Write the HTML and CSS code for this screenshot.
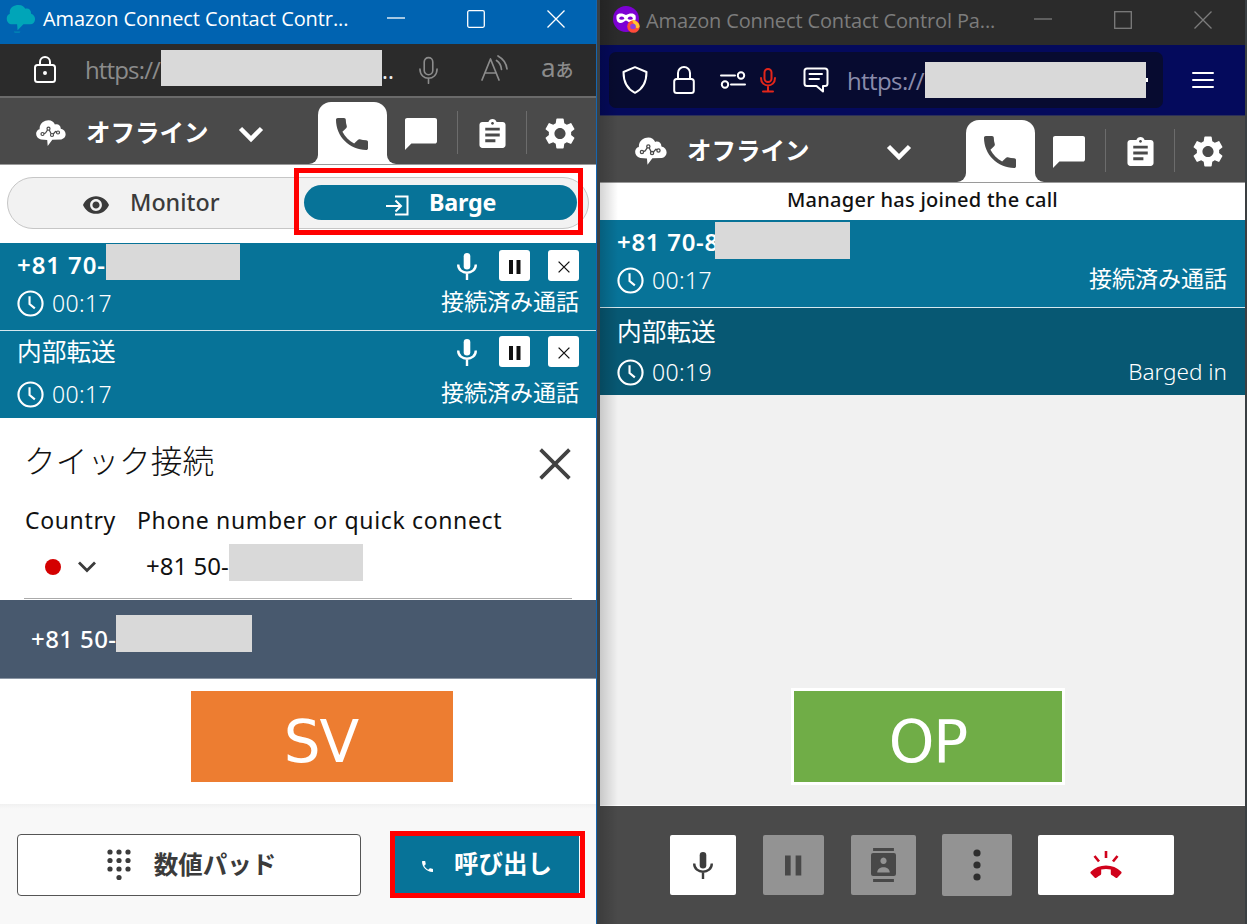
FILE: index.html
```html
<!DOCTYPE html>
<html lang="ja">
<head>
    <meta charset="UTF-8">
    <meta name="viewport" content="width=device-width, initial-scale=1.0">
    <title>Amazon Connect Contact Control Panel</title>
    <link rel="stylesheet" href="styles.css">
</head>
<body>
    <!-- shared icons -->
    <svg class="sprite" width="0" height="0">
        <symbol id="phone" viewBox="3 3 18 18"><path d="M6.62 10.79c1.44 2.83 3.76 5.14 6.59 6.59l2.2-2.2c.27-.27.67-.36 1.02-.24 1.12.37 2.33.57 3.57.57.55 0 1 .45 1 1V20c0 .55-.45 1-1 1-9.39 0-17-7.61-17-17 0-.55.45-1 1-1h3.5c.55 0 1 .45 1 1 0 1.25.2 2.45.57 3.57.11.35.03.74-.25 1.02l-2.2 2.2z"/></symbol>
        <symbol id="chat" viewBox="2 2 20 20"><path d="M20.7 2H3.3C2.6 2 2 2.6 2 3.300v18.700l4-4h14.700c.7 0 1.300-.6 1.300-1.300V3.300c0-.7-.6-1.300-1.300-1.300z"/></symbol>
        <symbol id="clipboard" viewBox="3 1 18 20"><path d="M19 3h-4.180C14.400 1.840 13.300 1 12 1c-1.300 0-2.400.84-2.820 2H5c-1.100 0-2 .9-2 2v14c0 1.100.9 2 2 2h14c1.100 0 2-.9 2-2V5c0-1.100-.9-2-2-2zm-7 0c.55 0 1 .45 1 1s-.45 1-1 1-1-.45-1-1 .45-1 1-1zm2 14H7v-2h7v2zm3-4H7v-2h10v2zm0-4H7V7h10v2z"/></symbol>
        <symbol id="gear" viewBox="2 2 20 20"><path d="M19.140 12.940c.04-.3.06-.61.06-.94 0-.32-.02-.64-.07-.94l2.030-1.580c.18-.14.23-.41.12-.61l-1.920-3.320c-.12-.22-.37-.29-.59-.22l-2.390.96c-.5-.38-1.030-.7-1.620-.94l-.36-2.540c-.04-.24-.24-.41-.48-.41h-3.840c-.24 0-.43.17-.47.41l-.36 2.540c-.59.24-1.130.57-1.620.94l-2.390-.96c-.22-.08-.47 0-.59.22L2.740 8.870c-.12.21-.08.47.12.61l2.030 1.580c-.05.3-.09.63-.09.94s.02.64.07.94l-2.030 1.580c-.18.14-.23.41-.12.61l1.920 3.320c.12.22.37.29.59.22l2.390-.96c.5.38 1.030.7 1.620.94l.36 2.540c.05.24.24.41.48.41h3.840c.24 0 .44-.17.47-.41l.36-2.540c.59-.24 1.130-.56 1.620-.94l2.390.96c.22.08.47 0 .59-.22l1.920-3.320c.12-.22.07-.47-.12-.61l-2.010-1.580zM12 15.600c-1.980 0-3.600-1.620-3.600-3.600s1.620-3.600 3.600-3.600 3.600 1.620 3.600 3.600-1.620 3.600-3.600 3.600z"/></symbol>
        <symbol id="cloud" viewBox="0 0 30 27">
            <path d="M5 19.500C-1.500 18-1 10 3.600 9.200 3.500 3 8.500.3 12.500.3c3 0 5.500 1.700 6.400 4.200 3-1 5.800.8 5.900 4.200 6 1.200 6.700 9.300.5 10.800l-9 .3-4.600 6.200-.5-6z"/>
            <g class="graph"><path d="M6.500 14l3-1 3-4.500 3.500 7 3.500-4 3 1"/><circle cx="6.500" cy="14" r="1.500"/><circle cx="12.500" cy="8.700" r="1.500"/><circle cx="16" cy="15" r="1.500"/><circle cx="22" cy="12.500" r="1.500"/></g>
        </symbol>
        <symbol id="chevron" viewBox="0 0 26 18"><path d="M2.500 3.500L13 14 23.500 3.500" fill="none" stroke="currentColor" stroke-width="4.500"/></symbol>
        <symbol id="mic" viewBox="0 0 20 27"><rect x="6.700" y="0" width="6.600" height="16.500" rx="3.300"/><path d="M1.200 11.500c0 11 17.600 11 17.600 0M10 20v7" fill="none" stroke="currentColor" stroke-width="2.400"/></symbol>
        <symbol id="pause" viewBox="0 0 12 14"><path d="M0 0h4v14H0zM7.500 0h4v14h-4z"/></symbol>
        <symbol id="cross" viewBox="0 0 20 20"><path d="M1 1l18 18M19 1L1 19" fill="none" stroke="currentColor"/></symbol>
        <symbol id="clock" viewBox="0 0 28 28"><g fill="none" stroke="currentColor" stroke-width="2.200"><circle cx="14" cy="14" r="12.500"/><path d="M13 6.500v8l5.500 4.500"/></g></symbol>
    </svg>

    <div class="desktop">
        <section class="window window-sv">
            <header class="titlebar">
                <svg class="app-icon" viewBox="0 0 30 30"><path d="M5 20C-1 18 0 10 4 9 3 3 8 0 13 0c4 0 6 2 7 4 3-1 6 1 6 5 6 2 5 11-1 11h-7l-6 6-.500-6z"/><path d="M8 27.500h7l-1 1.300H9z" opacity=".6"/></svg>
                <span class="title">Amazon Connect Contact Contr...</span>
                <div class="win-buttons">
                    <svg viewBox="0 0 18 18"><path d="M0 8h18"/></svg>
                    <svg viewBox="0 0 18 18"><rect x=".7" y=".7" width="16.600" height="16.600" rx="1.500"/></svg>
                    <svg viewBox="0 0 18 18"><path d="M.5.5l17 17M17.500.5l-17 17"/></svg>
                </div>
            </header>

            <div class="addressbar">
                <svg class="lock" viewBox="0 0 22 28"><rect x="1" y="9" width="20" height="17" rx="2.500"/><path d="M6 9V6a5 5 0 0 1 10 0v3"/><circle cx="11" cy="17" r="1" fill="#fff"/></svg>
                <span class="url">https://</span>
                <span class="mask"></span>
                <span class="url-dots">..</span>
                <svg class="voice" viewBox="0 0 20 28"><rect x="5.500" y="1" width="9" height="18" rx="4.500"/><path d="M1 13c0 13 18 13 18 0M10 22.500V28"/></svg>
                <svg class="read" viewBox="0 0 28 26"><path d="M1 25L9.500 4 18 25M4 18h11M15.500 5.500q4.500 3 5 9M17 1q8 4.500 9 13"/></svg>
                <span class="translate">a<small>あ</small></span>
            </div>

            <nav class="agentbar">
                <div class="status">
                    <svg class="cloud"><use href="#cloud"/></svg>
                    <span>オフライン</span>
                    <svg class="chevron"><use href="#chevron"/></svg>
                </div>
                <div class="tab active"><svg class="i-phone"><use href="#phone"/></svg></div>
                <div class="rest">
                    <div class="tab"><svg class="i-chat"><use href="#chat"/></svg></div>
                    <div class="tab"><svg class="i-clip"><use href="#clipboard"/></svg></div>
                    <div class="tab"><svg class="i-gear"><use href="#gear"/></svg></div>
                </div>
            </nav>

            <div class="mode">
                <div class="mode-pill">
                    <div class="monitor">
                        <svg class="eye" viewBox="1 4.500 22 15"><path d="M12 4.500C7 4.500 2.730 7.610 1 12c1.730 4.390 6 7.500 11 7.500s9.270-3.110 11-7.500c-1.730-4.390-6-7.500-11-7.500zM12 17c-2.760 0-5-2.240-5-5s2.240-5 5-5 5 2.240 5 5-2.240 5-5 5zm0-8c-1.660 0-3 1.340-3 3s1.340 3 3 3 3-1.340 3-3-1.340-3-3-3z"/></svg>
                        <span>Monitor</span>
                    </div>
                    <div class="barge">
                        <svg viewBox="0 0 23 21"><path d="M9 1.500h12.500v18H9M0 11h14.500M9.500 5.500L15 11l-5.500 5.500"/></svg>
                        <span>Barge</span>
                    </div>
                </div>
                <div class="highlight highlight-barge"></div>
            </div>

            <div class="call call-first">
                <div class="call-top">
                    <span class="number">+81 70-</span><span class="mask"></span>
                    <svg class="call-mic"><use href="#mic"/></svg>
                    <button><svg class="i-pause"><use href="#pause"/></svg></button>
                    <button><svg class="i-cross"><use href="#cross"/></svg></button>
                </div>
                <div class="call-bottom">
                    <svg class="clock"><use href="#clock"/></svg>
                    <span class="time">00:17</span>
                    <span class="state">接続済み通話</span>
                </div>
            </div>
            <div class="call call-second">
                <div class="call-top">
                    <span class="name">内部転送</span>
                    <svg class="call-mic"><use href="#mic"/></svg>
                    <button><svg class="i-pause"><use href="#pause"/></svg></button>
                    <button><svg class="i-cross"><use href="#cross"/></svg></button>
                </div>
                <div class="call-bottom">
                    <svg class="clock"><use href="#clock"/></svg>
                    <span class="time">00:17</span>
                    <span class="state">接続済み通話</span>
                </div>
            </div>

            <div class="quick">
                <div class="quick-head">
                    <h2>クイック接続</h2>
                    <svg class="quick-close"><use href="#cross"/></svg>
                </div>
                <div class="labels"><span>Country</span><span>Phone number or quick connect</span></div>
                <div class="field">
                    <span class="flag"></span>
                    <svg class="country-chevron" viewBox="0 0 20 14"><path d="M2 2.500l8 8 8-8"/></svg>
                    <span class="phone-text">+81 50-</span><span class="mask"></span>
                </div>
            </div>
            <div class="suggestion"><span class="phone-text">+81 50-</span><span class="mask"></span></div>
            <div class="role-area"><div class="role role-sv">SV</div></div>

            <footer class="sv-footer">
                <button class="keypad">
                    <svg viewBox="0 0 24 32"><circle cx="3" cy="3" r="2.600"/><circle cx="12" cy="3" r="2.600"/><circle cx="21" cy="3" r="2.600"/><circle cx="3" cy="11.500" r="2.600"/><circle cx="12" cy="11.500" r="2.600"/><circle cx="21" cy="11.500" r="2.600"/><circle cx="3" cy="20" r="2.600"/><circle cx="12" cy="20" r="2.600"/><circle cx="21" cy="20" r="2.600"/><circle cx="12" cy="28.500" r="2.600"/></svg>
                    <span>数値パッド</span>
                </button>
                <div class="dial-box">
                    <button class="dial"><svg><use href="#phone"/></svg><span>呼び出し</span></button>
                </div>
            </footer>
        </section>

        <section class="window window-op">
            <header class="titlebar">
                <svg class="app-icon" viewBox="0 0 28 28">
                    <circle cx="13" cy="13" r="13" fill="#7d00d4"/>
                    <path d="M3.500 9.500C5 6.500 10 7 13 9c3-2 8-2.500 9.500.5 1 5-1 7.500-4.500 7.500-2.500 0-3.500-2.500-5-2.500S10.500 17 8 17c-3.500 0-5-2.500-4.500-7.500z" fill="#fff"/>
                    <ellipse cx="8.700" cy="12.200" rx="2.400" ry="1.600" fill="#7d00d4"/><ellipse cx="17.300" cy="12.200" rx="2.400" ry="1.600" fill="#7d00d4"/>
                    <circle cx="20.500" cy="20.500" r="6.300" fill="#ff4b3a"/><path d="M19 13.500c4 1 7 3 7.500 7-1 3-4 2-5-1s-2-3-2.500-6z" fill="#ffc52e"/><circle cx="20" cy="20.500" r="2.800" fill="#8b3fe0"/>
                </svg>
                <span class="title">Amazon Connect Contact Control Pa...</span>
                <div class="win-buttons">
                    <svg viewBox="0 0 18 18"><path d="M0 8h18"/></svg>
                    <svg viewBox="0 0 18 18"><rect x=".7" y=".7" width="16.600" height="16.600"/></svg>
                    <svg viewBox="0 0 18 18"><path d="M.5.5l17 17M17.500.5l-17 17"/></svg>
                </div>
            </header>

            <div class="addressbar">
                <div class="urlbox">
                    <svg class="shield" viewBox="0 0 26 28"><path d="M13 1.200L24.500 6C24.500 15 22 22.500 13 26.800 4 22.500 1.500 15 1.500 6z"/></svg>
                    <svg class="lock" viewBox="0 0 22 28"><rect x="1.200" y="13" width="19.600" height="14" rx="2.500"/><path d="M5 13V7a6 6 0 0 1 12 0v6"/></svg>
                    <svg class="perms" viewBox="0 0 26 18"><path d="M1 4.500h14M11 13.500h14"/><circle cx="21" cy="4.500" r="3.200"/><circle cx="5" cy="13.500" r="3.200"/></svg>
                    <svg class="redmic" viewBox="0 0 16 25"><rect x="4.500" y="1" width="7" height="13" rx="3.500"/><path d="M1 10c0 10 14 10 14 0M8 17.500V23M3 23.500h10"/></svg>
                    <svg class="bubble" viewBox="0 0 26 26"><path d="M4 1.500h18q2.500 0 2.500 2.500v12.500q0 2.500-2.500 2.500h-2v5.500L13.500 19H4q-2.500 0-2.500-2.500V4q0-2.500 2.500-2.500zM6.500 7H19M6.500 12h9.500"/></svg>
                    <span class="url">https://</span>
                    <span class="mask"></span>
                    <span class="url-end"></span>
                </div>
                <svg class="menu" viewBox="0 0 22 18"><path d="M1 2h20M1 9h20M1 16h20"/></svg>
            </div>

            <nav class="agentbar">
                <div class="status">
                    <svg class="cloud"><use href="#cloud"/></svg>
                    <span>オフライン</span>
                    <svg class="chevron"><use href="#chevron"/></svg>
                </div>
                <div class="tab active"><svg class="i-phone"><use href="#phone"/></svg></div>
                <div class="rest">
                    <div class="tab"><svg class="i-chat"><use href="#chat"/></svg></div>
                    <div class="tab"><svg class="i-clip"><use href="#clipboard"/></svg></div>
                    <div class="tab"><svg class="i-gear"><use href="#gear"/></svg></div>
                </div>
            </nav>

            <div class="notice">Manager has joined the call</div>

            <div class="call call-first">
                <div class="call-top"><span class="number">+81 70-8</span><span class="mask"></span></div>
                <div class="call-bottom">
                    <svg class="clock"><use href="#clock"/></svg>
                    <span class="time">00:17</span>
                    <span class="state">接続済み通話</span>
                </div>
            </div>
            <div class="call call-second">
                <div class="call-top"><span class="name">内部転送</span></div>
                <div class="call-bottom">
                    <svg class="clock"><use href="#clock"/></svg>
                    <span class="time">00:19</span>
                    <span class="state state-en">Barged in</span>
                </div>
            </div>

            <div class="role-area"><div class="role role-op">OP</div></div>

            <footer class="op-footer">
                <button class="b-mute"><svg class="i-mic"><use href="#mic"/></svg></button>
                <button class="b-hold off"><svg class="i-hold"><use href="#pause"/></svg></button>
                <button class="b-contacts off"><svg class="i-contacts" viewBox="0 0 24 34" preserveAspectRatio="none"><path d="M2 0h20v3H2zM2 31h20v3H2z"/><path fill-rule="evenodd" d="M2 5h20q2 0 2 2v19q0 2-2 2H2q-2 0-2-2V7q0-2 2-2zM12 9.500a3 3.300 0 1 0 .01 0zM6 24.500h12c0-7-12-7-12 0z"/></svg></button>
                <button class="b-more off"><svg class="i-more" viewBox="0 0 8 32"><circle cx="4" cy="4" r="3.600"/><circle cx="4" cy="16" r="3.600"/><circle cx="4" cy="28" r="3.600"/></svg></button>
                <button class="b-end"><svg class="i-end" viewBox="0 0 32 28"><path d="M16 14.500c6 0 11 2 15 6 .8.8.8 1.500 0 2.300l-3.500 3.600c-.8.8-1.600.7-2.300.1-1-.9-2.100-1.600-3.300-2.200-.8-.4-1.100-.9-1.100-1.700v-4c-3-.9-6.600-.9-9.600 0v4c0 .8-.3 1.300-1.100 1.700-1.200.6-2.300 1.300-3.300 2.200-.7.6-1.500.7-2.300-.1L1 22.800c-.8-.8-.8-1.500 0-2.300 4-4 9-6 15-6z"/><path d="M16 0v7M4.500 5l4.500 5.500M27.500 5L23 10.500" fill="none" stroke="currentColor" stroke-width="2.600"/></svg></button>
            </footer>
        </section>
    </div>
</body>
</html>
```

FILE: styles.css
```css
* {
    box-sizing: border-box;
}
body {
    margin: 0;
    font-family: "Noto Sans", "Noto Sans CJK JP", sans-serif;
    background: #3c4347;
}
svg {
    display: block;
    flex: none;
    fill: currentColor;
}
.sprite {
    position: absolute;
}
button {
    display: flex;
    align-items: center;
    justify-content: center;
    padding: 0;
    border: none;
    font-family: inherit;
}
.desktop {
    display: grid;
    grid-template-columns: 597px 645px;
    column-gap: 3px;
    width: 1247px;
    height: 924px;
    overflow: hidden;
    background: #3a3f42;
}
.window {
    display: flex;
    flex-direction: column;
    height: 924px;
    white-space: nowrap;
}
.window > * {
    flex: none;
}
.window-sv {
    background: #fff;
    border-right: 1px solid #1565b0;
}
.window-op {
    position: relative;
    background: #f1f1f1;
}
/* shadow cast by the front window */
.window-op::before {
    content: "";
    position: absolute;
    left: 0;
    top: 0;
    width: 18px;
    height: 100%;
    background: linear-gradient(to right, rgba(0, 0, 0, 0.17), rgba(0, 0, 0, 0));
}
.mask {
    flex: none;
    background: #d9d9d9;
    height: 36px;
}

/* title bars */
.titlebar {
    display: flex;
    align-items: center;
    font-family: "Open Sans", sans-serif;
    font-size: 20px;
}
.window-sv .titlebar {
    height: 44px;
    padding: 0 31px 6px 6px;
    background: #0063b1;
    color: #fff;
}
.window-op .titlebar {
    height: 45px;
    padding: 0 33px 6px 13px;
    background: #2b2b2b;
    color: #7c7c7c;
}
.window-sv .app-icon {
    width: 29px;
    height: 29px;
    color: #00a5b8;
}
.window-op .app-icon {
    width: 28px;
    height: 28px;
}
.title {
    line-height: 28px;
}
.window-sv .title {
    margin-left: 8px;
    letter-spacing: -0.1px;
}
.window-op .title {
    margin-left: 5px;
    margin-top: 2px;
    letter-spacing: -0.13px;
}
.win-buttons {
    display: flex;
    gap: 62px;
    margin-left: auto;
}
.win-buttons svg {
    width: 18px;
    height: 18px;
    fill: none;
    stroke: currentColor;
    stroke-width: 1.3;
}

/* address bars */
.addressbar {
    display: flex;
    align-items: center;
}
.addressbar svg {
    fill: none;
    stroke: currentColor;
    stroke-width: 2;
    stroke-linecap: round;
    stroke-linejoin: round;
}
.url {
    font-family: "Open Sans", sans-serif;
    font-size: 24px;
    line-height: 36px;
}
.window-sv .addressbar {
    height: 54px;
    padding-left: 34px;
    background: #2b2b2b;
    color: #8c8c8c;
    border-bottom: 2px solid #6a6a6a;
}
.window-sv .lock {
    width: 22px;
    height: 28px;
    color: #fff;
}
.window-sv .url {
    width: 76px;
    margin: 0 0 0 29px;
    letter-spacing: -0.85px;
}
.window-sv .addressbar .mask {
    width: 221px;
    margin-bottom: 16px;
    margin-top: 12px;
}
.url-dots {
    width: 37px;
    font-size: 22px;
    color: #eee;
}
.voice {
    width: 19px;
    height: 28px;
}
.window-sv .voice,
.window-sv .read {
    stroke-width: 1.7;
}
.read {
    width: 28px;
    height: 26px;
    margin: 0 0 4px 43px;
}
.translate {
    margin: 0 0 3px 32px;
    font-size: 26px;
    line-height: 30px;
}
.translate small {
    font-size: 18px;
    font-weight: 500;
}
.window-op .addressbar {
    height: 71px;
    padding-left: 9px;
    background: #040a5c;
    border-bottom: 1px solid #2b2f58;
}
.urlbox {
    display: flex;
    align-items: center;
    width: 554px;
    height: 56px;
    padding-left: 13px;
    border-radius: 7px;
    background: #070b30;
    color: #fff;
}
.shield {
    width: 26px;
    height: 28px;
}
.window-op .lock {
    width: 22px;
    height: 28px;
    margin-left: 25px;
}
.perms {
    width: 26px;
    height: 18px;
    margin-left: 25px;
}
.redmic {
    width: 16px;
    height: 25px;
    margin-left: 14px;
    color: #e3261b;
}
.bubble {
    width: 26px;
    height: 26px;
    margin-left: 27px;
}
.window-op .url {
    width: 78px;
    margin-left: 18px;
    margin-top: 2px;
    color: #8a8bab;
    letter-spacing: -0.6px;
}
.window-op .addressbar .mask {
    width: 221px;
}
.url-end {
    width: 2px;
    height: 4px;
    background: #fff;
}
.window-op .menu {
    width: 22px;
    height: 18px;
    margin-left: 29px;
    color: #fff;
}

/* agent status and tabs */
.agentbar {
    display: flex;
    height: 66px;
    color: #fff;
    background: linear-gradient(#4a4a4a 48px, #fff 48px);
}
.status {
    display: flex;
    align-items: center;
    padding-top: 6px;
    padding-bottom: 4px;
    background: #4a4a4a;
    border-bottom-right-radius: 9px;
    font-family: "Noto Sans CJK JP", sans-serif;
    font-size: 24.5px;
    font-weight: 700;
}
.status span {
    width: 123px;
    margin-left: 20px;
    line-height: 36px;
}
.window-sv .status {
    width: 318px;
    padding-left: 36px;
}
.window-op .status {
    width: 366px;
    padding-left: 35px;
}
.cloud {
    width: 30px;
    height: 27px;
    margin-top: 3px;
}
.window-op .cloud {
    width: 32px;
    height: 29px;
}
.graph {
    fill: #fff;
    stroke: #4a4a4a;
    stroke-width: 1.2;
}
.graph path {
    fill: none;
}
.chevron {
    width: 26px;
    height: 18px;
    margin-top: 3px;
}
.window-sv .chevron {
    margin-left: 29px;
}
.window-op .chevron {
    margin-left: 76px;
}
.rest {
    display: flex;
    flex: 1;
    background: #4a4a4a;
    border-bottom-left-radius: 9px;
}
.tab {
    display: flex;
    align-items: center;
    justify-content: center;
    width: 69.5px;
    padding-top: 5px;
}
.tab + .tab {
    background: linear-gradient(#6c6c6c, #6c6c6c) 0 13px / 1px 43px no-repeat;
}
.tab.active {
    width: 69px;
    margin-top: 4px;
    padding-top: 2px;
    padding-right: 1px;
    color: #4a4a4a;
    background: #fff;
    border-radius: 13px 13px 0 0;
}
.i-phone {
    width: 32px;
    height: 32px;
}
.i-chat {
    width: 32px;
    height: 32px;
    margin-right: 1px;
}
.i-clip {
    width: 27px;
    height: 29px;
    margin-left: 2px;
}
.i-gear {
    width: 32px;
    height: 31px;
    margin-right: 1px;
}

/* monitor / barge toggle */
.mode {
    position: relative;
    height: 79px;
    padding: 12px 7px 0;
    border-top: 1px solid #9a9a9a;
}
.mode-pill {
    display: flex;
    align-items: center;
    width: 582px;
    height: 52px;
    background: #f2f2f2;
    border: 1.5px solid #c6c6c6;
    border-radius: 26px;
    color: #3b3b3b;
    font-size: 23.3px;
    font-weight: 500;
}
.monitor {
    display: flex;
    align-items: center;
    width: 296px;
    padding-left: 75px;
}
.eye {
    width: 26px;
    height: 18px;
    margin-top: 3px;
}
.monitor span {
    margin-left: 21px;
    padding-bottom: 3px;
}
.barge {
    display: flex;
    align-items: center;
    width: 273px;
    height: 35px;
    margin-bottom: 1px;
    padding-left: 82px;
    background: #077398;
    border-radius: 18px;
    color: #fff;
    font-weight: 700;
}
.barge svg {
    width: 23px;
    height: 21px;
    margin-top: 5px;
    fill: none;
    stroke: #fff;
    stroke-width: 2;
}
.barge span {
    margin-left: 20px;
    padding-bottom: 1px;
    letter-spacing: -0.2px;
}
.highlight {
    border: 5px solid #f00;
}
.highlight-barge {
    position: absolute;
    left: 294px;
    top: 3px;
    width: 289px;
    height: 67px;
}

/* calls */
.call {
    height: 87px;
    padding: 0 17px;
    background: #077398;
    color: #fff;
}
.call-second {
    height: 88px;
    border-top: 1px solid #d5e8ef;
}
.call-top,
.call-bottom {
    display: flex;
    align-items: center;
}
.window-sv .call-top {
    height: 45px;
}
.window-sv .call-bottom {
    height: 31px;
}
.number {
    width: 89px;
    font-size: 24px;
    font-weight: 600;
    letter-spacing: 0.9px;
    line-height: 36px;
    padding-bottom: 2px;
}
.name {
    font-size: 24.7px;
    line-height: 36px;
    padding-bottom: 1px;
}
.call .mask {
    width: 134px;
    margin-bottom: 7px;
}
.call-mic {
    width: 20px;
    height: 27px;
    margin-top: 2px;
    margin-left: auto;
    margin-right: 22px;
}
.call button {
    width: 31px;
    height: 31px;
    border-radius: 3px;
    background: #fff;
    color: #111;
}
.call button + button {
    margin-left: 18px;
}
.call button svg {
    margin-top: 3px;
}
.i-pause {
    width: 12px;
    height: 14px;
}
.i-cross {
    width: 12px;
    height: 12px;
    stroke-width: 2.2;
}
.clock {
    width: 27px;
    height: 27px;
}
.time {
    margin-left: 8px;
    font-size: 23px;
    font-weight: 350;
    letter-spacing: 0.4px;
    line-height: 30px;
    padding-bottom: 2px;
}
.state {
    margin-left: auto;
    font-size: 23px;
    line-height: 30px;
    padding-bottom: 5px;
}
.call-first .state {
    padding-bottom: 6px;
}
.window-sv .call-second .call-top {
    height: 41px;
}
.window-sv .call-second .call-bottom {
    height: 45px;
}
.window-sv .name {
    padding-bottom: 0;
}
.window-op .call {
    padding-right: 18px;
}
.window-op .call-top {
    height: 44px;
}
.window-op .call-bottom {
    height: 33px;
}
.window-op .call-second {
    background: #075873;
}
.window-op .call-second .call-top {
    height: 48px;
}
.window-op .number {
    width: 98px;
    padding-bottom: 1px;
    letter-spacing: 0.7px;
}
.window-op .name {
    padding-bottom: 0;
}
.window-op .state {
    padding-bottom: 6px;
}
.window-op .call .mask {
    position: relative;
    width: 135px;
    height: 37px;
    margin-bottom: 3px;
}
.window-op .state-en {
    font-weight: 350;
    font-size: 22.5px;
    padding-bottom: 2px;
}
.notice {
    height: 38px;
    border-top: 1px solid #9a9a9a;
    background: #fff;
    color: #111;
    text-align: center;
    font-size: 20px;
    font-weight: 500;
    letter-spacing: 0.27px;
    line-height: 34px;
}

/* quick connect */
.quick {
    height: 182px;
    padding: 19px 24px 0;
    color: #111;
}
.quick-head {
    display: flex;
    align-items: center;
    justify-content: space-between;
    height: 48px;
}
.quick h2 {
    margin: 0;
    font-size: 31.7px;
    font-weight: 300;
    line-height: 48px;
}
.quick-close {
    width: 32px;
    height: 32px;
    margin-top: 6px;
    margin-right: 1px;
    color: #424242;
    stroke-width: 2.3;
}
.labels {
    display: flex;
    gap: 21px;
    margin-top: 19px;
    padding-left: 1px;
    font-size: 23px;
    letter-spacing: 0.65px;
    line-height: 32px;
}
.field {
    display: flex;
    align-items: center;
    width: 548px;
    height: 63px;
    padding-left: 21px;
    border-bottom: 1px solid #aaa;
}
.flag {
    width: 16px;
    height: 16px;
    border-radius: 50%;
    background: #d40000;
}
.country-chevron {
    width: 20px;
    height: 14px;
    margin-left: 16px;
    fill: none;
    stroke: #3b3b3b;
    stroke-width: 2.8;
}
.phone-text {
    font-size: 24px;
    line-height: 36px;
}
.field .phone-text {
    width: 83px;
    margin-left: 49px;
    padding-bottom: 2px;
}
.field .mask {
    width: 134px;
    height: 37px;
    margin-bottom: 9px;
}
.suggestion {
    display: flex;
    align-items: center;
    height: 79px;
    padding-left: 31px;
    background: #48596e;
    border-bottom: 1px solid #8b96a4;
    color: #fff;
}
.suggestion .phone-text {
    width: 85px;
    padding-bottom: 1px;
    font-weight: 500;
    letter-spacing: 0.4px;
}
.suggestion .mask {
    width: 136px;
    height: 37px;
    margin-bottom: 11px;
}

/* role labels */
.role-area {
    display: flex;
}
.role {
    color: #fff;
    font-family: "DejaVu Sans", sans-serif;
    font-size: 58px;
    letter-spacing: -1px;
    text-align: center;
}
.window-sv .role-area {
    height: 125px;
    padding: 12px 0 0 191px;
}
.role-sv {
    width: 262px;
    height: 91px;
    padding-right: 2px;
    background: #ed7d31;
    line-height: 102px;
}
.window-op .role-area {
    height: 411px;
    padding: 293px 0 0 191px;
    border-bottom: 1px solid #fff;
}
.role-op {
    width: 274px;
    height: 97px;
    border: 3px solid #fff;
    background: #70ad47;
    line-height: 102px;
}

/* bottom bars */
.sv-footer {
    display: flex;
    height: 120px;
    padding-left: 17px;
    background: linear-gradient(#f1f1f1, #f8f8f8 5px);
}
.keypad {
    width: 344px;
    height: 62px;
    margin-top: 30px;
    padding-left: 5px;
    border: 1.5px solid #555;
    border-radius: 4px;
    background: #fff;
    color: #3b3b3b;
    font-size: 24.5px;
    font-weight: 700;
}
.keypad svg {
    width: 24px;
    height: 32px;
    margin-right: 23px;
}
.keypad span,
.dial span {
    padding-bottom: 4px;
}
.dial-box {
    width: 195px;
    height: 67px;
    margin: 27px 0 0 29px;
    border: 5px solid #f00;
}
.dial {
    width: 184px;
    height: 57px;
    background: #077398;
    color: #fff;
    font-size: 24.5px;
    font-weight: 700;
}
.dial svg {
    width: 11px;
    height: 11px;
    margin-top: 3px;
    margin-right: 21px;
}
.op-footer {
    display: flex;
    align-items: flex-start;
    height: 118px;
    padding: 29px 0 0 70px;
    background: #4a4a4a;
}
.op-footer button {
    height: 60px;
    border-radius: 2px;
    background: #fff;
    color: #3d3d3d;
}
.op-footer .off {
    background: #939393;
    color: #484848;
}
.b-mute {
    width: 66px;
}
.b-hold {
    width: 61px;
    margin-left: 27px;
}
.b-contacts {
    width: 65px;
    margin-left: 27px;
}
.op-footer .b-more {
    width: 70px;
    height: 62px;
    margin: -1px 0 0 26px;
    color: #2e2e2e;
}
.b-end {
    width: 136px;
    margin-left: 26px;
}
.op-footer .b-end {
    color: #d0021b;
}
.i-mic {
    width: 20px;
    height: 29px;
}
.i-hold {
    width: 17px;
    height: 21px;
}
.i-contacts {
    width: 25px;
    height: 34px;
}
.i-more {
    width: 8px;
    height: 32px;
}
.i-end {
    width: 32px;
    height: 28px;
}
```
